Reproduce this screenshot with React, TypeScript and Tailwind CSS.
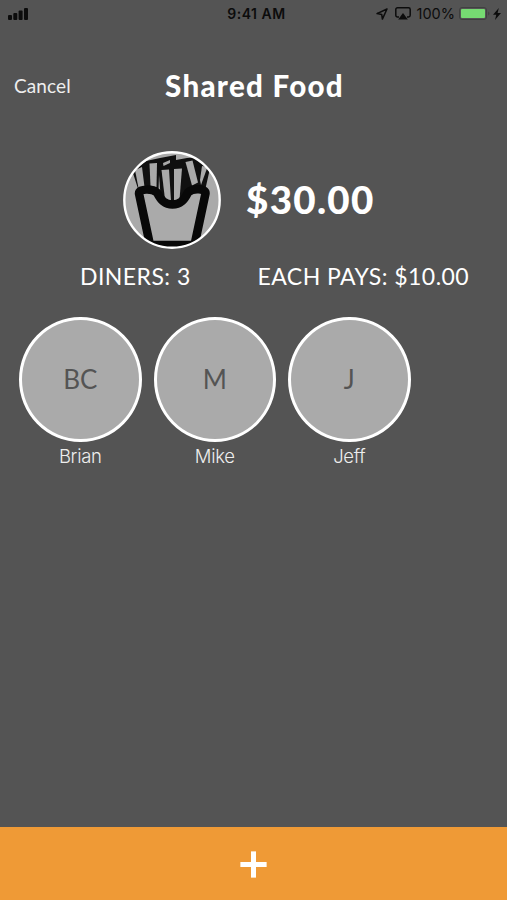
import { Plus } from 'lucide-react'

type Diner = {
  name: string
  initials: string
}

const diners: Diner[] = [
  { name: 'Brian', initials: 'BC' },
  { name: 'Mike', initials: 'M' },
  { name: 'Jeff', initials: 'J' },
]

export default function App() {
  return (
    <div className="flex h-[900px] w-[507px] flex-col overflow-hidden bg-[#545454] font-[Lato,sans-serif] text-white">
      <StatusBar />
      <Header />
      <main className="flex-1">
        <Summary />
        <ul className="mt-[29px] flex gap-[12px] pl-[19px]">
          {diners.map(d => (
            <DinerItem key={d.name} diner={d} />
          ))}
        </ul>
      </main>
      <button aria-label="Add diner" className="flex h-[73px] w-full items-center justify-center bg-[#ef9a36] pt-px">
        <Plus className="size-[45px]" strokeWidth={2.7} strokeLinecap="butt" />
      </button>
    </div>
  )
}

function StatusBar() {
  return (
    <div className="grid h-7 grid-cols-3 items-center pr-[6px] pl-2 font-[Inter,sans-serif] text-[#0c0c0c]">
      <svg className="h-[13px] w-5" viewBox="0 0 20 13" fill="currentColor">
        <rect x="0" y="7" width="4" height="5" rx="1" />
        <rect x="5.3" y="5" width="4" height="7" rx="1" />
        <rect x="10.6" y="2.5" width="4" height="9.5" rx="1" />
        <rect x="16" y="0" width="4" height="12" rx="1" />
      </svg>
      <span className="-mt-0.5 pl-1 text-center text-[14px] font-semibold tracking-[0.5px] whitespace-nowrap">
        9:41 AM
      </span>
      <div className="-mt-px flex items-center justify-end">
        <svg className="h-3 w-3" viewBox="0 0 12 12" fill="none" stroke="currentColor" strokeWidth="1.5" strokeLinejoin="round">
          <path d="M11 1 1 5.6l4.7.8.7 4.7z" />
        </svg>
        <svg className="ml-[7px] h-[13px] w-4" viewBox="0 0 16 13" fill="none" stroke="currentColor" strokeWidth="1.5">
          <path d="M4 10H2.5A1.7 1.7 0 0 1 .8 8.3V2.5A1.7 1.7 0 0 1 2.5.8h11a1.7 1.7 0 0 1 1.7 1.7v5.8a1.7 1.7 0 0 1-1.7 1.7H12" />
          <path d="m8 6 4.8 6.4H3.2z" fill="currentColor" stroke="none" />
        </svg>
        <span className="ml-[6px] text-[14.5px]">100%</span>
        <svg className="ml-[4px] h-[13px] w-8" viewBox="0 0 32 13">
          <rect x="0.5" y="0.5" width="27" height="12" rx="2.5" fill="none" stroke="#404040" />
          <rect x="2" y="2" width="24" height="9" rx="1" fill="#76db72" />
          <path d="M29.2 4.5c1.7.6 1.7 3.4 0 4z" fill="#404040" />
        </svg>
        <svg className="ml-[2px] h-3 w-2" viewBox="0 0 8 12" fill="currentColor">
          <path d="M5.8 0 0 6.8h3.3L2 12l6-7.1H4.6z" />
        </svg>
      </div>
    </div>
  )
}

function Header() {
  return (
    <header className="grid h-[115px] grid-cols-[1fr_auto_1fr] items-center pl-[14px] pr-[13px]">
      <button className="justify-self-start text-[19px] leading-none tracking-[0.1px] text-[#eeeeee]">Cancel</button>
      <h1 className="pl-px text-[29.5px] leading-none font-black tracking-[1.3px]">Shared Food</h1>
    </header>
  )
}

function Summary() {
  return (
    <section className="mt-[8px]">
      <div className="flex h-[98px] items-center pl-[123px]">
        <FriesIcon />
        <span className="-mt-px ml-[25px] text-[38.5px] leading-none font-black tracking-[1.3px]">$30.00</span>
      </div>
      <div className="mt-[15px] flex h-[24px] items-center pl-[80px] text-[23px] leading-none tracking-[0.45px] whitespace-nowrap">
        <span className="w-[177.5px]">DINERS: 3</span>
        <span>EACH PAYS: $10.00</span>
      </div>
    </section>
  )
}

function DinerItem({ diner }: { diner: Diner }) {
  return (
    <li className="flex w-[122.5px] flex-col items-center">
      <div className="flex h-[125px] w-full items-center justify-center rounded-[50%] border-3 border-white bg-[#aaaaaa] pb-0.5 text-[26px] leading-none text-[#545454]">
        {diner.initials}
      </div>
      <span className="mt-[2px] font-[Inter,sans-serif] text-[18.5px] leading-6 font-light tracking-[-0.3px] text-[#eeeeee]">
        {diner.name}
      </span>
    </li>
  )
}

function FriesIcon() {
  return (
    <svg className="size-[98px] shrink-0" viewBox="0 0 98 98">
      <defs>
        <clipPath id="plate">
          <circle cx="49" cy="49" r="47.5" />
        </clipPath>
      </defs>
      <circle cx="49" cy="49" r="48" fill="#aaaaaa" />
      <g clipPath="url(#plate)">
        {/* dark bundle behind, lighter fries on top */}
        <path d="M9 19 23 10 37 7 53 4v5l11-2 12-1 2 5 10 2-7 31-32 12-32-12z" fill="#101010" />
        <g fill="#aaaaaa">
          <path d="m12 19 7-3 2.500 20-6 1z" />
          <path d="m26.500 12.500 7.500-.5-.5 24-6-1z" />
          <path d="m40 12 7-3v3l-6.500 3z" />
          <path d="m38.500 19 7.500-.5 2 31-6-1z" />
          <path d="m51 18 8-.5-2.500 31-5.500 1z" />
          <path d="m62.500 11 7-1.500 5.500 22-6 3z" />
          <path d="m79 15 5.500 1-6.500 18-1-5z" />
          <path d="m36 24 1.200 16-1.700-1z" />
        </g>
        <path
          d="M16 42.500c0-5 13-5 18-1 4 8 8 12 15.500 12S61 49.500 65 41.500c5-5 18-4 17.500 1L71.500 94H27z"
          fill="#aaaaaa"
          stroke="#080808"
          strokeWidth="8.5"
          strokeLinejoin="round"
        />
      </g>
      <circle cx="49" cy="49" r="47.7" fill="none" stroke="white" strokeWidth="2.4" />
    </svg>
  )
}
